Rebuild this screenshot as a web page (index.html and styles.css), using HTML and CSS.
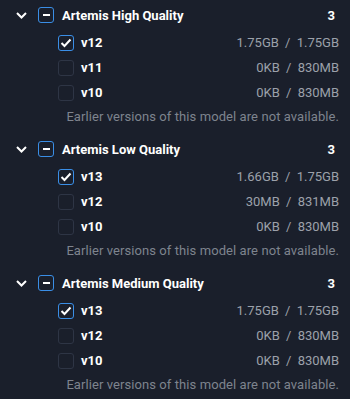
FILE: index.html
```html
<!DOCTYPE html>
<html lang="en">
<head>
    <meta charset="UTF-8">
    <title>Models</title>
    <link rel="stylesheet" href="styles.css">
</head>
<body>
<div class="list">

    <div class="group">
        <div class="group-head">
            <svg class="chev" width="11" height="7" viewBox="0 0 11 7"><polyline points="1,1 5.5,5.5 10,1"/></svg>
            <span class="box box-mixed"><i></i></span>
            <span class="title">Artemis High Quality</span>
            <span class="count">3</span>
        </div>
        <div class="row">
            <span class="box box-on"><svg width="12" height="10" viewBox="0 0 12 10"><polyline points="1.5,5 4.5,8 10.5,1.5"/></svg></span>
            <span class="ver">v12</span>
            <span class="size">1.75GB <b>/</b> 1.75GB</span>
        </div>
        <div class="row">
            <span class="box"></span>
            <span class="ver">v11</span>
            <span class="size">0KB <b>/</b> 830MB</span>
        </div>
        <div class="row">
            <span class="box"></span>
            <span class="ver">v10</span>
            <span class="size">0KB <b>/</b> 830MB</span>
        </div>
        <div class="note">Earlier versions of this model are not available.</div>
    </div>

    <div class="group">
        <div class="group-head">
            <svg class="chev" width="11" height="7" viewBox="0 0 11 7"><polyline points="1,1 5.5,5.5 10,1"/></svg>
            <span class="box box-mixed"><i></i></span>
            <span class="title">Artemis Low Quality</span>
            <span class="count">3</span>
        </div>
        <div class="row">
            <span class="box box-on"><svg width="12" height="10" viewBox="0 0 12 10"><polyline points="1.5,5 4.5,8 10.5,1.5"/></svg></span>
            <span class="ver">v13</span>
            <span class="size">1.66GB <b>/</b> 1.75GB</span>
        </div>
        <div class="row">
            <span class="box"></span>
            <span class="ver">v12</span>
            <span class="size">30MB <b>/</b> 831MB</span>
        </div>
        <div class="row">
            <span class="box"></span>
            <span class="ver">v10</span>
            <span class="size">0KB <b>/</b> 830MB</span>
        </div>
        <div class="note">Earlier versions of this model are not available.</div>
    </div>

    <div class="group">
        <div class="group-head">
            <svg class="chev" width="11" height="7" viewBox="0 0 11 7"><polyline points="1,1 5.5,5.5 10,1"/></svg>
            <span class="box box-mixed"><i></i></span>
            <span class="title">Artemis Medium Quality</span>
            <span class="count">3</span>
        </div>
        <div class="row">
            <span class="box box-on"><svg width="12" height="10" viewBox="0 0 12 10"><polyline points="1.5,5 4.5,8 10.5,1.5"/></svg></span>
            <span class="ver">v13</span>
            <span class="size">1.75GB <b>/</b> 1.75GB</span>
        </div>
        <div class="row">
            <span class="box"></span>
            <span class="ver">v12</span>
            <span class="size">0KB <b>/</b> 830MB</span>
        </div>
        <div class="row">
            <span class="box"></span>
            <span class="ver">v10</span>
            <span class="size">0KB <b>/</b> 830MB</span>
        </div>
        <div class="note">Earlier versions of this model are not available.</div>
    </div>

</div>
</body>
</html>
```

FILE: styles.css
```css
*{
    margin: 0;
    padding: 0;
    box-sizing: border-box;
}
body
{
    background: #1a1f2b;
    font-family: Roboto, "Liberation Sans", sans-serif;
    font-size: 13px;
    color: #ffffff;
}
.list
{
    width: 350px;
    height: 399px;
    overflow: hidden;
}
.group
{
    margin-bottom: 5px;
}
.group-head
{
    height: 30px;
    display: flex;
    align-items: center;
    padding-left: 16px;
    padding-right: 15px;
}
.chev
{
    width: 11px;
    height: 7px;
    margin-right: 11px;
}
.chev polyline
{
    fill: none;
    stroke: #ffffff;
    stroke-width: 2;
}
.title
{
    font-weight: 700;
    margin-left: 8px;
    flex: 1;
}
.count
{
    font-weight: 700;
}
.box
{
    width: 16px;
    height: 16px;
    border: 1.5px solid #2e3545;
    border-radius: 3px;
    display: flex;
    align-items: center;
    justify-content: center;
    flex: none;
}
.box-on,
.box-mixed
{
    border-color: #3a8ee6;
}
.box-mixed i
{
    display: block;
    width: 7px;
    height: 2px;
    background: #ffffff;
}
.box-on polyline
{
    fill: none;
    stroke: #ffffff;
    stroke-width: 2;
}
.row
{
    height: 25px;
    display: flex;
    align-items: center;
    padding-left: 58px;
    padding-right: 11px;
}
.ver
{
    font-weight: 700;
    margin-left: 7px;
    flex: 1;
}
.size
{
    color: #9ca1aa;
}
.size b
{
    font-weight: 400;
    margin: 0 3px;
}
.note
{
    height: 24px;
    line-height: 24px;
    padding-right: 11px;
    text-align: right;
    letter-spacing: 0.08px;
    color: #7e848e;
}
```
